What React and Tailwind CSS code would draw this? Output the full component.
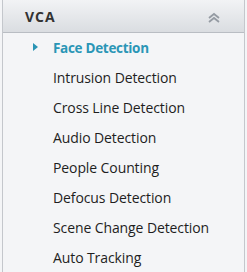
import React from "react";

const items = [
  "Intrusion Detection",
  "Cross Line Detection",
  "Audio Detection",
  "People Counting",
  "Defocus Detection",
  "Scene Change Detection",
  "Auto Tracking",
];

export default function App() {
  return (
    <div className="w-[247px] h-[272px] bg-[#f4f5f7] overflow-hidden" style={{ fontFamily: '"Open Sans", "Noto Sans", sans-serif' }}>
      <div className="ml-[2px] mr-[2px] h-full border-l border-r border-[#c4c7cc] bg-[#f4f5f7] flex flex-col">
        <div className="h-[33px] shrink-0 flex items-center justify-between pl-[22px] pr-[23px] bg-gradient-to-b from-[#f2f3f5] to-[#dadde1] border-b border-[#b9bdc3]">
          <span className="text-[14px] font-bold tracking-[1px] text-[#333] mt-[1px]">VCA</span>
          <svg width="14" height="12" viewBox="0 0 14 12" className="mt-[3px]">
            <path d="M2 6 L7 2 L12 6" fill="none" stroke="#959ba3" strokeWidth="1.8" />
            <path d="M2 10 L7 6 L12 10" fill="none" stroke="#959ba3" strokeWidth="1.8" />
          </svg>
        </div>
        <div className="flex flex-col">
          <div className="h-[30px] flex items-center relative pl-[50px]">
            <svg width="5" height="8" viewBox="0 0 5 8" className="absolute left-[30px] top-[10px]">
              <path d="M0 0 L5 4 L0 8 Z" fill="#2a94b4" />
            </svg>
            <span className="text-[13.5px] font-bold text-[#2a96b6] tracking-[-0.3px]">Face Detection</span>
          </div>
          {items.map((t) => (
            <div key={t} className="h-[29.9px] flex items-center pl-[50px] text-[14px] tracking-[-0.1px] text-[#1e1e1e]">
              {t}
            </div>
          ))}
        </div>
      </div>
    </div>
  );
}
